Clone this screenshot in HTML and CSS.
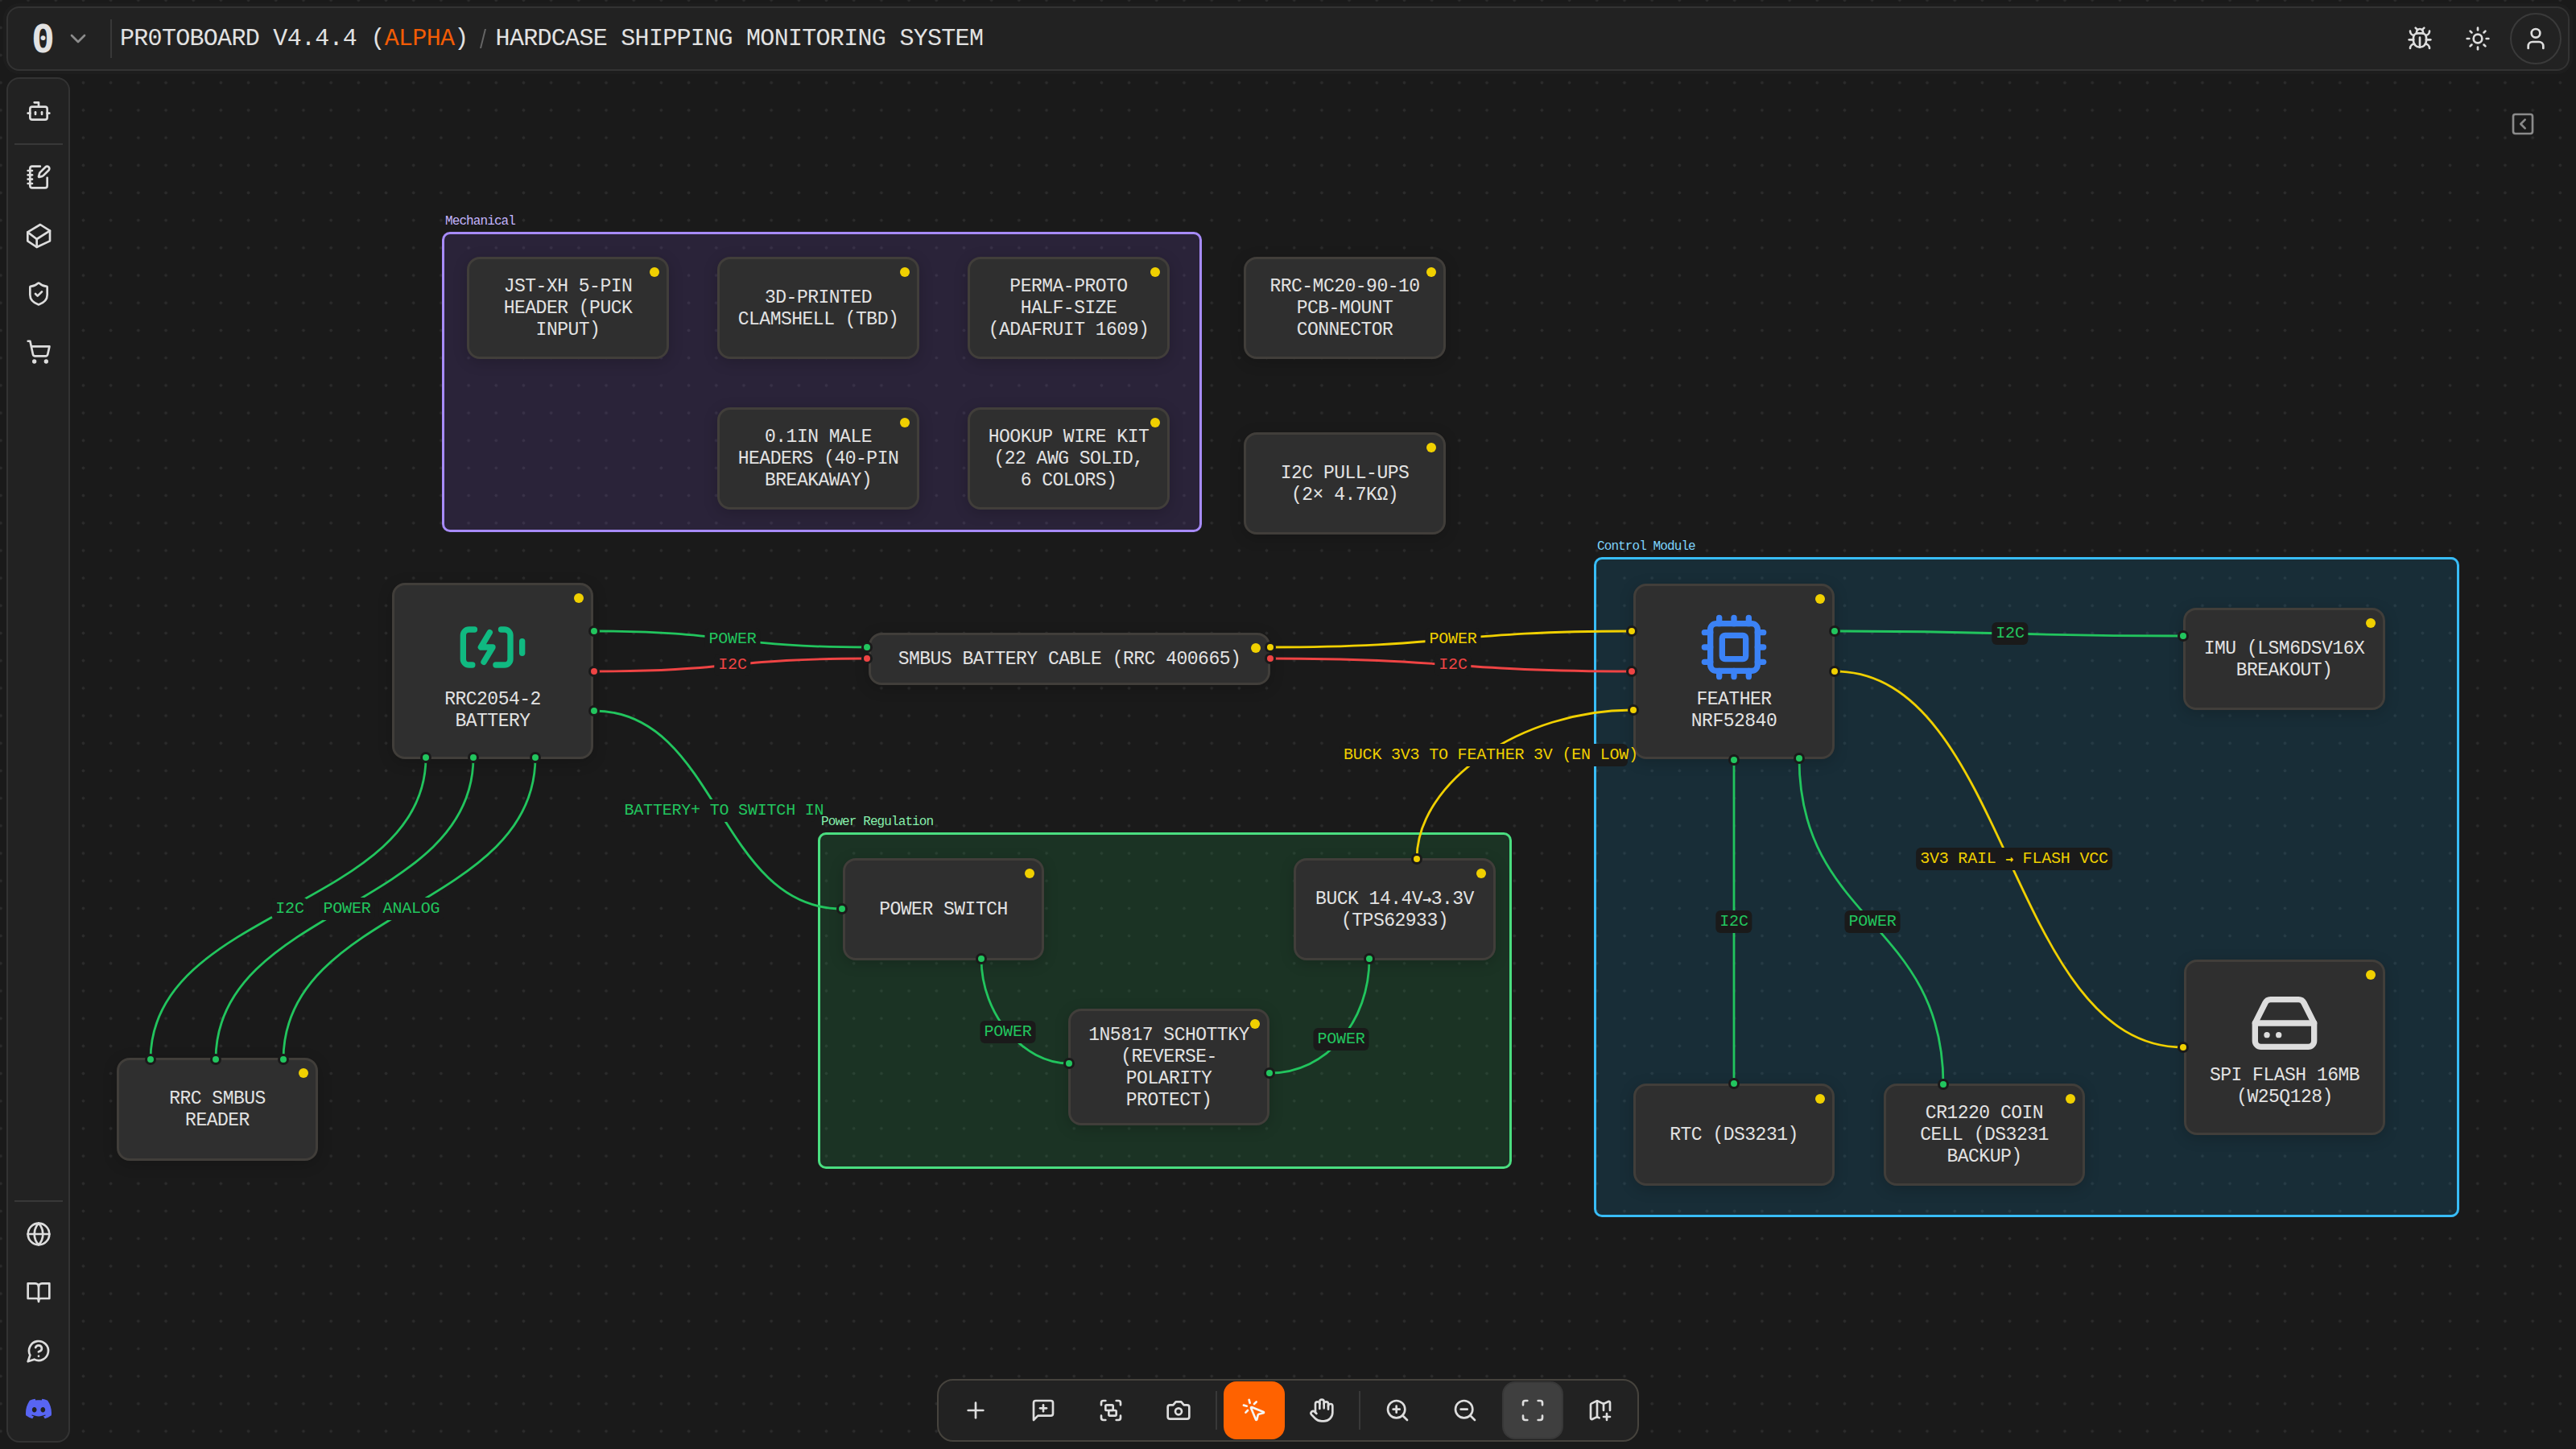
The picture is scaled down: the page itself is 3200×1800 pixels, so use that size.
FILE: index.html
```html
<!DOCTYPE html>
<html lang="en">
<head>
  <meta charset="UTF-8" />
  <title>Pr0toboard</title>
  <link rel="stylesheet" href="styles.css">
</head>
<body>
<div class="app">
  <!-- free canvas: groups, edges, nodes, handles, labels -->
  <div class="canvas">
    <div class="group group-mech"><span class="group-label">Mechanical</span></div>
    <div class="group group-power"><span class="group-label">Power Regulation</span></div>
    <div class="group group-control"><span class="group-label">Control Module</span></div>

    <svg class="edges" viewBox="0 0 3200 1800">
      <path class="green" d="M738 784C908 784 908 804 1077 804"/>
      <path class="red" d="M738 834C908 834 908 818 1077 818"/>
      <path class="green" d="M738 883C892 883 892 1129 1046 1129"/>
      <path class="yellow" d="M1578 804C1803 804 1803 784 2027 784"/>
      <path class="red" d="M1578 818C1803 818 1803 834 2027 834"/>
      <path class="yellow" d="M1760 1067C1760 970 1892 882 2027 882"/>
      <path class="green" d="M2279 784C2495 784 2495 790 2712 790"/>
      <path class="yellow" d="M2279 834C2495 834 2495 1301 2712 1301"/>
      <path class="green" d="M2154 944L2154 1346"/>
      <path class="green" d="M2235 942C2235 1145 2414 1145 2414 1347"/>
      <path class="green" d="M529 941C529 1128 187 1128 187 1316"/>
      <path class="green" d="M588 941C588 1128 268 1128 268 1316"/>
      <path class="green" d="M665 941C665 1128 352 1128 352 1316"/>
      <path class="green" d="M1219 1191C1219 1260 1271 1321 1328 1321"/>
      <path class="green" d="M1577 1333C1649 1333 1701 1268 1701 1191"/>
    </svg>

    <div class="node n-jst">JST-XH 5-PIN<br>HEADER (PUCK<br>INPUT)</div>
    <div class="node n-clam">3D-PRINTED<br>CLAMSHELL (TBD)</div>
    <div class="node n-perma">PERMA-PROTO<br>HALF-SIZE<br>(ADAFRUIT 1609)</div>
    <div class="node n-mc20">RRC-MC20-90-10<br>PCB-MOUNT<br>CONNECTOR</div>
    <div class="node n-headers">0.1IN MALE<br>HEADERS (40-PIN<br>BREAKAWAY)</div>
    <div class="node n-hookup">HOOKUP WIRE KIT<br>(22 AWG SOLID,<br>6 COLORS)</div>
    <div class="node n-pullups">I2C PULL-UPS<br>(2× 4.7KΩ)</div>
    <div class="node n-battery">
      <svg class="icon node-icon teal" viewBox="0 0 24 24"><path d="m11 7-3 5h4l-3 5"/><path d="M14.856 6H16a2 2 0 0 1 2 2v8a2 2 0 0 1-2 2h-2.935"/><path d="M22 14v-4"/><path d="M5.14 18H4a2 2 0 0 1-2-2V8a2 2 0 0 1 2-2h1.856"/></svg>
      <span>RRC2054-2<br>BATTERY</span>
    </div>
    <div class="node n-cable">SMBUS BATTERY CABLE (RRC 400665)</div>
    <div class="node n-feather">
      <svg class="icon node-icon blue" viewBox="0 0 24 24"><path d="M12 20v2"/><path d="M12 2v2"/><path d="M17 20v2"/><path d="M17 2v2"/><path d="M2 12h2"/><path d="M2 17h2"/><path d="M2 7h2"/><path d="M20 12h2"/><path d="M20 17h2"/><path d="M20 7h2"/><path d="M7 20v2"/><path d="M7 2v2"/><rect x="4" y="4" width="16" height="16" rx="2"/><rect x="8" y="8" width="8" height="8" rx="1"/></svg>
      <span>FEATHER<br>NRF52840</span>
    </div>
    <div class="node n-imu">IMU (LSM6DSV16X<br>BREAKOUT)</div>
    <div class="node n-rtc">RTC (DS3231)</div>
    <div class="node n-coin">CR1220 COIN<br>CELL (DS3231<br>BACKUP)</div>
    <div class="node n-flash">
      <svg class="icon node-icon" viewBox="0 0 24 24"><line x1="22" x2="2" y1="12" y2="12"/><path d="M5.45 5.11 2 12v6a2 2 0 0 0 2 2h16a2 2 0 0 0 2-2v-6l-3.45-6.89A2 2 0 0 0 16.76 4H7.24a2 2 0 0 0-1.79 1.11z"/><line x1="6" x2="6.01" y1="16" y2="16"/><line x1="10" x2="10.01" y1="16" y2="16"/></svg>
      <span>SPI FLASH 16MB<br>(W25Q128)</span>
    </div>
    <div class="node n-reader">RRC SMBUS<br>READER</div>
    <div class="node n-switch">POWER SWITCH</div>
    <div class="node n-buck"><span>BUCK 14.4V<b class="arrow">→</b>3.3V</span><span>(TPS62933)</span></div>
    <div class="node n-diode">1N5817 SCHOTTKY<br>(REVERSE-<br>POLARITY<br>PROTECT)</div>

    <svg class="handles" viewBox="0 0 3200 1800">
      <circle class="green" cx="738" cy="784" r="5.5"/>
      <circle class="red" cx="738" cy="834" r="5.5"/>
      <circle class="green" cx="738" cy="883" r="5.5"/>
      <circle class="green" cx="529" cy="941" r="5.5"/>
      <circle class="green" cx="588" cy="941" r="5.5"/>
      <circle class="green" cx="665" cy="941" r="5.5"/>
      <circle class="green" cx="1077" cy="804" r="5.5"/>
      <circle class="red" cx="1077" cy="818" r="5.5"/>
      <circle class="yellow" cx="1578" cy="804" r="5.5"/>
      <circle class="red" cx="1578" cy="818" r="5.5"/>
      <circle class="yellow" cx="2027" cy="784" r="5.5"/>
      <circle class="red" cx="2027" cy="834" r="5.5"/>
      <circle class="yellow" cx="2029" cy="882" r="5.5"/>
      <circle class="green" cx="2279" cy="784" r="5.5"/>
      <circle class="yellow" cx="2279" cy="834" r="5.5"/>
      <circle class="green" cx="2154" cy="944" r="5.5"/>
      <circle class="green" cx="2235" cy="942" r="5.5"/>
      <circle class="green" cx="2712" cy="790" r="5.5"/>
      <circle class="yellow" cx="2712" cy="1301" r="5.5"/>
      <circle class="green" cx="2154" cy="1346" r="5.5"/>
      <circle class="green" cx="2414" cy="1347" r="5.5"/>
      <circle class="green" cx="187" cy="1316" r="5.5"/>
      <circle class="green" cx="268" cy="1316" r="5.5"/>
      <circle class="green" cx="352" cy="1316" r="5.5"/>
      <circle class="green" cx="1046" cy="1129" r="5.5"/>
      <circle class="green" cx="1219" cy="1191" r="5.5"/>
      <circle class="yellow" cx="1760" cy="1067" r="5.5"/>
      <circle class="green" cx="1701" cy="1191" r="5.5"/>
      <circle class="green" cx="1328" cy="1321" r="5.5"/>
      <circle class="green" cx="1577" cy="1333" r="5.5"/>
    </svg>

    <span class="edge-label lbl-green l-power1">POWER</span>
    <span class="edge-label lbl-red l-i2c1">I2C</span>
    <span class="edge-label lbl-yellow l-power2">POWER</span>
    <span class="edge-label lbl-red l-i2c2">I2C</span>
    <span class="edge-label lbl-yellow l-buck">BUCK 3V3 TO FEATHER 3V (EN LOW)</span>
    <span class="edge-label lbl-green l-batt">BATTERY+ TO SWITCH IN</span>
    <span class="edge-label lbl-green l-r1">I2C</span>
    <span class="edge-label lbl-green l-r2">POWER</span>
    <span class="edge-label lbl-green l-r3">ANALOG</span>
    <span class="edge-label lbl-green l-imu">I2C</span>
    <span class="edge-label lbl-green l-rtc">I2C</span>
    <span class="edge-label lbl-green l-coin">POWER</span>
    <span class="edge-label lbl-yellow l-rail">3V3 RAIL <b class="arrow">→</b> FLASH VCC</span>
    <span class="edge-label lbl-green l-sw">POWER</span>
    <span class="edge-label lbl-green l-dd">POWER</span>

    <svg class="icon collapse" viewBox="0 0 24 24"><rect x="3" y="3" width="18" height="18" rx="2"/><path d="m14 16-4-4 4-4"/></svg>
  </div>

  <header class="topbar">
    <div class="brand">
      <span class="logo">0</span>
      <svg class="icon chevron" viewBox="0 0 24 24"><path d="m6 9 6 6 6-6"/></svg>
    </div>
    <div class="title">
      <span>PR0TOBOARD V4.4.4 (<em>ALPHA</em>)</span>
      <i class="slash"></i>
      <span>HARDCASE SHIPPING MONITORING SYSTEM</span>
    </div>
    <div class="top-actions">
      <button class="icon-btn"><svg class="icon" viewBox="0 0 24 24"><path d="M12 20v-9"/><path d="M14 7a4 4 0 0 1 4 4v3a6 6 0 0 1-12 0v-3a4 4 0 0 1 4-4z"/><path d="M14.12 3.88 16 2"/><path d="M21 21a4 4 0 0 0-3.81-4"/><path d="M21 5a4 4 0 0 1-3.55 3.97"/><path d="M22 13h-4"/><path d="M3 21a4 4 0 0 1 3.81-4"/><path d="M3 5a4 4 0 0 0 3.55 3.97"/><path d="M6 13H2"/><path d="m8 2 1.88 1.88"/><path d="M9 7.13V6a3 3 0 1 1 6 0v1.13"/></svg></button>
      <button class="icon-btn"><svg class="icon" viewBox="0 0 24 24"><circle cx="12" cy="12" r="4"/><path d="M12 2v2"/><path d="M12 20v2"/><path d="m4.93 4.93 1.41 1.41"/><path d="m17.66 17.66 1.41 1.41"/><path d="M2 12h2"/><path d="M20 12h2"/><path d="m6.34 17.66-1.41 1.41"/><path d="m19.07 4.93-1.41 1.41"/></svg></button>
      <button class="icon-btn avatar"><svg class="icon" viewBox="0 0 24 24"><path d="M19 21v-2a4 4 0 0 0-4-4H9a4 4 0 0 0-4 4v2"/><circle cx="12" cy="7" r="4"/></svg></button>
    </div>
  </header>

  <aside class="sidebar">
    <div class="side-group">
      <button class="side-btn"><svg class="icon" viewBox="0 0 24 24"><path d="M12 8V4H8"/><rect x="4" y="8" width="16" height="12" rx="2"/><path d="M2 14h2"/><path d="M20 14h2"/><path d="M15 13v2"/><path d="M9 13v2"/></svg></button>
      <hr class="side-rule">
      <button class="side-btn"><svg class="icon" viewBox="0 0 24 24"><path d="M13.4 2H6a2 2 0 0 0-2 2v16a2 2 0 0 0 2 2h12a2 2 0 0 0 2-2v-7.4"/><path d="M2 6h4"/><path d="M2 10h4"/><path d="M2 14h4"/><path d="M2 18h4"/><path d="M21.378 5.626a1 1 0 1 0-3.004-3.004l-5.01 5.012a2 2 0 0 0-.506.854l-.837 2.87a.5.5 0 0 0 .62.62l2.87-.837a2 2 0 0 0 .854-.506z"/></svg></button>
      <button class="side-btn"><svg class="icon" viewBox="0 0 24 24"><path d="M13.5 1.5 22.5 7.25V16.75L10.25 22.5 1.75 16.75V8.5Z"/><path d="M1.75 8.5 10.25 15 22.5 7.25"/><path d="M10.25 15V22.5"/></svg></button>
      <button class="side-btn"><svg class="icon" viewBox="0 0 24 24"><path d="M20 13c0 5-3.5 7.5-7.66 8.95a1 1 0 0 1-.67-.01C7.5 20.5 4 18 4 13V6a1 1 0 0 1 1-1c2 0 4.5-1.2 6.24-2.72a1.17 1.17 0 0 1 1.52 0C14.51 3.81 17 5 19 5a1 1 0 0 1 1 1z"/><path d="m9 12 2 2 4-4"/></svg></button>
      <button class="side-btn"><svg class="icon" viewBox="0 0 24 24"><circle cx="8" cy="21" r="1"/><circle cx="19" cy="21" r="1"/><path d="M2.05 2.05h2l2.66 12.42a2 2 0 0 0 2 1.58h9.78a2 2 0 0 0 1.95-1.57l1.65-7.43H5.12"/></svg></button>
    </div>
    <div class="side-group">
      <hr class="side-rule">
      <button class="side-btn"><svg class="icon" viewBox="0 0 24 24"><circle cx="12" cy="12" r="10"/><path d="M12 2a14.5 14.5 0 0 0 0 20 14.5 14.5 0 0 0 0-20"/><path d="M2 12h20"/></svg></button>
      <button class="side-btn"><svg class="icon" viewBox="0 0 24 24"><path d="M12 6v15"/><path d="M2 4h7a3 3 0 0 1 3 3 3 3 0 0 1 3-3h7v14h-8a2 2 0 0 0-2 2 2 2 0 0 0-2-2H2z"/></svg></button>
      <button class="side-btn"><svg class="icon" viewBox="0 0 24 24"><path d="M7.9 20A9 9 0 1 0 4 16.1L2 22Z"/><path d="M9.09 9a3 3 0 0 1 5.83 1c0 2-3 3-3 3"/><path d="M12 17h.01"/></svg></button>
      <button class="side-btn"><svg class="discord" viewBox="0 0 24 24"><path d="M20.317 4.3698a19.7913 19.7913 0 00-4.8851-1.5152.0741.0741 0 00-.0785.0371c-.211.3753-.4447.8648-.6083 1.2495-1.8447-.2762-3.68-.2762-5.4868 0-.1636-.3933-.4058-.8742-.6177-1.2495a.077.077 0 00-.0785-.037 19.7363 19.7363 0 00-4.8852 1.515.0699.0699 0 00-.0321.0277C.5334 9.0458-.319 13.5799.0992 18.0578a.0824.0824 0 00.0312.0561c2.0528 1.5076 4.0413 2.4228 5.9929 3.0294a.0777.0777 0 00.0842-.0276c.4616-.6304.8731-1.2952 1.226-1.9942a.076.076 0 00-.0416-.1057c-.6528-.2476-1.2743-.5495-1.8722-.8923a.077.077 0 01-.0076-.1277c.1258-.0943.2517-.1923.3718-.2914a.0743.0743 0 01.0776-.0105c3.9278 1.7933 8.18 1.7933 12.0614 0a.0739.0739 0 01.0785.0095c.1202.099.246.1981.3728.2924a.077.077 0 01-.0066.1276 12.2986 12.2986 0 01-1.873.8914.0766.0766 0 00-.0407.1067c.3604.698.7719 1.3628 1.225 1.9932a.076.076 0 00.0842.0286c1.961-.6067 3.9495-1.5219 6.0023-3.0294a.077.077 0 00.0313-.0552c.5004-5.177-.8382-9.6739-3.5485-13.6604a.061.061 0 00-.0312-.0286zM8.02 15.3312c-1.1825 0-2.1569-1.0857-2.1569-2.419 0-1.3332.9555-2.4189 2.157-2.4189 1.2108 0 2.1757 1.0952 2.1568 2.419 0 1.3332-.9555 2.4189-2.1569 2.4189zm7.9748 0c-1.1825 0-2.1569-1.0857-2.1569-2.419 0-1.3332.9554-2.4189 2.1569-2.4189 1.2108 0 2.1757 1.0952 2.1568 2.419 0 1.3332-.946 2.4189-2.1568 2.4189Z"/></svg></button>
    </div>
  </aside>

  <div class="toolbar">
    <button class="tool"><svg class="icon" viewBox="0 0 24 24"><path d="M5 12h14"/><path d="M12 5v14"/></svg></button>
    <button class="tool"><svg class="icon" viewBox="0 0 24 24"><path d="M21 15a2 2 0 0 1-2 2H7l-4 4V5a2 2 0 0 1 2-2h14a2 2 0 0 1 2 2z"/><path d="M12 7v6"/><path d="M9 10h6"/></svg></button>
    <button class="tool"><svg class="icon" viewBox="0 0 24 24"><path d="M3 7V5c0-1.1.9-2 2-2h2"/><path d="M17 3h2c1.1 0 2 .9 2 2v2"/><path d="M21 17v2c0 1.1-.9 2-2 2h-2"/><path d="M7 21H5c-1.1 0-2-.9-2-2v-2"/><rect x="7" y="7" width="7" height="5" rx="1"/><rect x="10" y="12" width="7" height="5" rx="1"/></svg></button>
    <button class="tool"><svg class="icon" viewBox="0 0 24 24"><path d="M14.5 4h-5L7 7H4a2 2 0 0 0-2 2v9a2 2 0 0 0 2 2h16a2 2 0 0 0 2-2V9a2 2 0 0 0-2-2h-3l-2.5-3z"/><circle cx="12" cy="13" r="3"/></svg></button>
    <span class="tool-sep"></span>
    <button class="tool tool-active"><svg class="icon" viewBox="0 0 24 24"><path d="M14 4.1 12 6"/><path d="m5.1 8-2.9-.8"/><path d="m6 12-1.9 2"/><path d="M7.2 2.2 8 5.1"/><path d="M9.037 9.69a.498.498 0 0 1 .653-.653l11 4.5a.5.5 0 0 1-.074.949l-4.349 1.041a1 1 0 0 0-.74.739l-1.04 4.35a.5.5 0 0 1-.95.074z"/></svg></button>
    <button class="tool"><svg class="icon" viewBox="0 0 24 24"><path d="M18 11V6a2 2 0 0 0-2-2a2 2 0 0 0-2 2"/><path d="M14 10V4a2 2 0 0 0-2-2a2 2 0 0 0-2 2v2"/><path d="M10 10.5V6a2 2 0 0 0-2-2a2 2 0 0 0-2 2v8"/><path d="M18 8a2 2 0 1 1 4 0v6a8 8 0 0 1-8 8h-2c-2.8 0-4.5-.86-5.99-2.34l-3.6-3.6a2 2 0 0 1 2.83-2.82L7 15"/></svg></button>
    <span class="tool-sep"></span>
    <button class="tool"><svg class="icon" viewBox="0 0 24 24"><circle cx="11" cy="11" r="8"/><path d="m21 21-4.35-4.35"/><path d="M11 8v6"/><path d="M8 11h6"/></svg></button>
    <button class="tool"><svg class="icon" viewBox="0 0 24 24"><circle cx="11" cy="11" r="8"/><path d="m21 21-4.35-4.35"/><path d="M8 11h6"/></svg></button>
    <button class="tool tool-on"><svg class="icon" viewBox="0 0 24 24"><path d="M3 7V5a2 2 0 0 1 2-2h2"/><path d="M17 3h2a2 2 0 0 1 2 2v2"/><path d="M21 17v2a2 2 0 0 1-2 2h-2"/><path d="M7 21H5a2 2 0 0 1-2-2v-2"/></svg></button>
    <button class="tool"><svg class="icon" viewBox="0 0 24 24"><path d="m11 19-1.106-.552a2 2 0 0 0-1.788 0l-3.659 1.83A1 1 0 0 1 3 19.381V6.618a1 1 0 0 1 .553-.894l4.553-2.277a2 2 0 0 1 1.788 0l4.212 2.106a2 2 0 0 0 1.788 0l3.659-1.83A1 1 0 0 1 21 4.619V12"/><path d="M15 5.764V12"/><path d="M18 15v6"/><path d="M21 18h-6"/><path d="M9 3.236v15"/></svg></button>
  </div>
</div>
</body>
</html>
```

FILE: styles.css
```css
* {
  box-sizing: border-box;
}
body {
  margin: 0;
  background: #1a1a1a;
  color: #e2e2e2;
  font-family: "Liberation Mono", monospace;
  overflow: hidden;
}
button {
  background: none;
  border: none;
  padding: 0;
  color: inherit;
}
.app {
  position: relative;
  width: 3200px;
  height: 1800px;
  padding: 8px;
  display: grid;
  grid-template-columns: 79px 1fr;
  grid-template-rows: 80px 1fr;
  row-gap: 8px;
}
.icon {
  width: 32px;
  height: 32px;
  fill: none;
  stroke: currentColor;
  stroke-width: 2;
  stroke-linecap: round;
  stroke-linejoin: round;
}
.arrow {
  font-family: "DejaVu Sans Mono", monospace;
  font-weight: 700;
  font-size: .8em;
}

/* top bar */
.topbar {
  position: relative;
  grid-column: 1 / 3;
  display: flex;
  align-items: center;
  background: #222;
  border: 2px solid #333;
  border-radius: 16px;
  box-shadow: 0 0 0 4px rgba(36, 36, 36, .35);
}
.brand {
  display: flex;
  align-items: center;
  width: 129px;
  height: 48px;
  padding-left: 29px;
  border-right: 2px solid #383838;
}
.logo {
  font-family: "DejaVu Sans Mono", monospace;
  font-weight: 700;
  font-size: 48px;
  line-height: 48px;
  width: 42px;
}
.chevron {
  color: #8c8c8c;
}
.title {
  display: flex;
  align-items: center;
  margin-left: 10px;
  font-size: 30px;
  letter-spacing: -.7px;
  white-space: nowrap;
}
.title em {
  font-style: normal;
  color: #f25c05;
}
.slash {
  width: 2px;
  height: 24px;
  margin: 0 15px 0 17px;
  background: #666;
  transform: skewX(-14deg);
}
.top-actions {
  margin-left: auto;
  display: flex;
  align-items: center;
  gap: 8px;
  padding-right: 8px;
}
.icon-btn {
  width: 64px;
  height: 64px;
  display: flex;
  align-items: center;
  justify-content: center;
  color: #ddd;
}
.avatar {
  border: 2px solid #3a3a3a;
  border-radius: 50%;
}

/* sidebar */
.sidebar {
  position: relative;
  display: flex;
  flex-direction: column;
  justify-content: space-between;
  background: #222;
  border: 2px solid #333;
  border-radius: 16px;
  padding: 4px 0 4px;
}
.side-group {
  display: flex;
  flex-direction: column;
  align-items: center;
}
.side-btn {
  width: 100%;
  height: 72.3px;
  display: flex;
  align-items: center;
  justify-content: center;
  color: #ddd;
}
.side-rule {
  width: 60px;
  height: 2px;
  margin: 4px 0;
  border: none;
  background: #383838;
}
.discord {
  width: 32px;
  height: 32px;
  fill: #5865f2;
}

/* canvas */
.canvas {
  position: absolute;
  inset: 0;
  background-color: #1a1a1a;
  background-image: radial-gradient(circle, #2b2b2b 1.7px, transparent 2.2px);
  background-size: 34.2px 34.2px;
  background-position: -16.2px -16.9px;
}
.edges,
.handles {
  position: absolute;
  left: 0;
  top: 0;
  width: 3200px;
  height: 1800px;
  pointer-events: none;
}
.edges path {
  fill: none;
  stroke-width: 2.8;
}
.edges .green {
  stroke: #22c55e;
}
.edges .red {
  stroke: #ef4444;
}
.edges .yellow {
  stroke: #f0d000;
}
.handles circle {
  stroke: #1a1a1a;
  stroke-width: 3;
}
.handles .green {
  fill: #22c55e;
}
.handles .red {
  fill: #ef4444;
}
.handles .yellow {
  fill: #f0d000;
}
.collapse {
  position: absolute;
  left: 3118px;
  top: 138px;
  color: #8a8a8a;
}

/* groups */
.group {
  position: absolute;
  border: 3px solid;
  border-radius: 10px;
}
.group-label {
  position: absolute;
  left: 1px;
  top: -25px;
  font-size: 16px;
  line-height: 18px;
  letter-spacing: -.9px;
  white-space: nowrap;
}
.group-mech {
  left: 549px;
  top: 288px;
  width: 944px;
  height: 373px;
  border-color: #a78bfa;
  background: rgba(139, 92, 246, .14);
}
.group-mech .group-label {
  color: #c4b5fd;
}
.group-power {
  left: 1016px;
  top: 1034px;
  width: 862px;
  height: 418px;
  border-color: #4ade80;
  background: rgba(34, 197, 94, .15);
}
.group-power .group-label {
  color: #86efac;
}
.group-control {
  left: 1980px;
  top: 692px;
  width: 1075px;
  height: 820px;
  border-color: #38bdf8;
  background: rgba(14, 165, 233, .14);
}
.group-control .group-label {
  color: #7dd3fc;
}

/* nodes */
.node {
  position: absolute;
  width: 251px;
  height: 127px;
  display: flex;
  flex-direction: column;
  align-items: center;
  justify-content: center;
  gap: 8px;
  padding-top: 2px;
  background: #2f2f2f;
  border: 3px solid #413e3a;
  border-radius: 16px;
  box-shadow: 0 4px 18px rgba(0, 0, 0, .18);
  font-size: 23px;
  line-height: 27px;
  letter-spacing: -.5px;
  text-align: center;
  color: #e2e2e2;
  white-space: nowrap;
}
.node::after {
  content: "";
  position: absolute;
  right: 9px;
  top: 10px;
  width: 12px;
  height: 12px;
  border-radius: 50%;
  background: #f0d000;
}
.node-icon {
  width: 88px;
  height: 88px;
  flex: none;
  color: #ddd;
}
.teal {
  color: #10b981;
}
.blue {
  color: #3b82f6;
}
.n-jst { left: 580px; top: 319px; }
.n-clam { left: 891px; top: 319px; }
.n-perma { left: 1202px; top: 319px; }
.n-mc20 { left: 1545px; top: 319px; }
.n-headers { left: 891px; top: 506px; }
.n-hookup { left: 1202px; top: 506px; }
.n-pullups { left: 1545px; top: 537px; }
.n-battery { left: 487px; top: 724px; width: 250px; height: 219px; }
.n-cable { left: 1079px; top: 786px; width: 499px; height: 65px; }
.n-feather { left: 2029px; top: 725px; width: 250px; height: 218px; }
.n-imu { left: 2712px; top: 755px; }
.n-rtc { left: 2029px; top: 1346px; width: 250px; }
.n-coin { left: 2340px; top: 1346px; width: 250px; }
.n-flash { left: 2713px; top: 1192px; width: 250px; height: 218px; }
.n-reader { left: 145px; top: 1314px; width: 250px; height: 128px; }
.n-switch { left: 1047px; top: 1066px; width: 250px; }
.n-buck { left: 1607px; top: 1066px; gap: 0; }
.n-diode { left: 1327px; top: 1253px; width: 250px; height: 145px; }

/* edge labels */
.edge-label {
  position: absolute;
  transform: translate(-50%, -50%);
  height: 28px;
  padding: 0 5px;
  background: #1a1a1a;
  border-radius: 6px;
  font-size: 20px;
  line-height: 28px;
  letter-spacing: -.2px;
  white-space: nowrap;
}
.lbl-green {
  color: #22c55e;
}
.lbl-red {
  color: #ef4444;
}
.lbl-yellow {
  color: #f0d000;
}
.l-power1 { left: 910px; top: 794px; }
.l-i2c1 { left: 910px; top: 826px; }
.l-power2 { left: 1805px; top: 794px; }
.l-i2c2 { left: 1805px; top: 826px; }
.l-buck { left: 1843px; top: 938px; width: 358px; }
.l-batt { left: 892px; top: 1007px; width: 243px; }
.l-r1 { left: 360px; top: 1129px; }
.l-r2 { left: 431px; top: 1129px; }
.l-r3 { left: 511px; top: 1129px; }
.l-imu { left: 2497px; top: 787px; }
.l-rtc { left: 2154px; top: 1145px; }
.l-coin { left: 2326px; top: 1145px; }
.l-rail { left: 2502px; top: 1067px; }
.l-sw { left: 1252px; top: 1282px; }
.l-dd { left: 1666px; top: 1291px; }

/* bottom toolbar */
.toolbar {
  position: absolute;
  left: 1164px;
  bottom: 9px;
  height: 78px;
  display: flex;
  align-items: center;
  gap: 8px;
  padding: 0 8px;
  background: #222;
  border: 2px solid #46433d;
  border-radius: 20px;
}
.tool {
  width: 76px;
  height: 72px;
  display: flex;
  align-items: center;
  justify-content: center;
  border-radius: 16px;
  color: #ddd;
}
.tool-active {
  background: #ff6200;
  color: #f5f5f5;
}
.tool-on {
  background: #3f3f3f;
  border: 2px solid #383838;
}
.tool-sep {
  width: 2px;
  height: 48px;
  background: #383838;
}
```
